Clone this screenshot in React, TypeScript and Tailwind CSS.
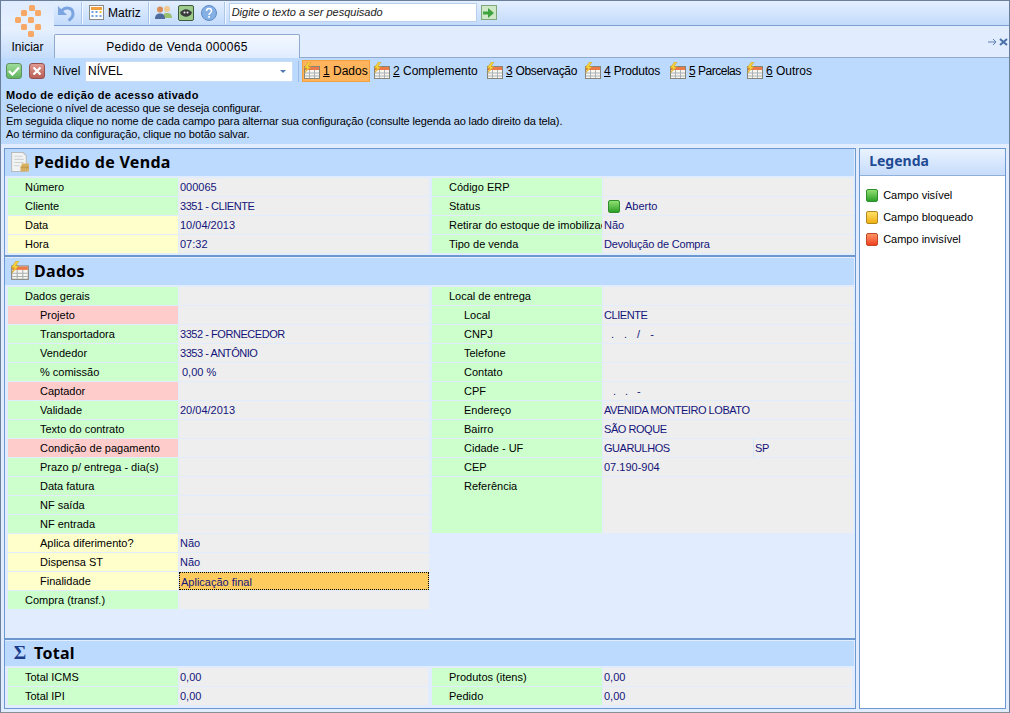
import { ReactNode } from "react";

const GREEN = "bg-[#ccffcc]";
const YELLOW = "bg-[#ffffcc]";
const RED = "bg-[#ffcccc]";

function TableIcon({ size = 18 }: { size?: number }) {
  return (
    <svg width={size} height={size} viewBox="0 0 18 18">
      <rect x="1.500" y="4.500" width="15" height="12" fill="#f8f6ee" stroke="#85857c" />
      <rect x="2" y="5" width="14" height="3" fill="#ec7a48" />
      <path d="M2 11h14M2 14h14M6.500 8v8M11.500 8v8" stroke="#a9b0b6" fill="none" />
      <path d="M5.500 0 1 6h3L1.500 11 8 4.500H5L8 0z" fill="#f9d63e" stroke="#c4941c" strokeWidth="0.500" />
    </svg>
  );
}

function Logo() {
  const squares = [
    [14, 0], [6, 5], [20, 5], [0, 12], [13, 12], [6, 19], [20, 19], [13, 26],
  ];
  return (
    <svg width="26" height="32" viewBox="0 0 26 32">
      {squares.map(([x, y]) => (
        <rect key={`${x}-${y}`} x={x} y={y} width="6" height="6" rx="1.500" fill="#f7a866" />
      ))}
    </svg>
  );
}

function Sep() {
  return <div className="w-[2px] h-[22px] bg-[#f4f9ff] border-l border-[#a9c5e8]" />;
}

function Tab({
  n,
  label,
  active,
  w,
  tight,
}: {
  n: string;
  label: string;
  active?: boolean;
  w?: string;
  tight?: string;
}) {
  return (
    <div
      className={`flex items-center gap-[2px] h-[22px] ${w ?? ""} ${
        active ? "bg-[#fdb45c] border border-[#f2a040]" : "border border-transparent"
      }`}
    >
      <TableIcon />
      <span className={`whitespace-nowrap ${tight ?? ""}`}>
        <span className="underline">{n}</span> {label}
      </span>
    </div>
  );
}

// upper case runs narrower in the original font
function Caps({ children }: { children: ReactNode }) {
  return <span className="tracking-[-0.45px]">{children}</span>;
}

function Row({
  label,
  value,
  color = GREEN,
  indent,
  h = "h-[18px]",
  children,
  focus,
}: {
  label: string;
  value?: string;
  color?: string;
  indent?: boolean;
  h?: string;
  children?: ReactNode;
  focus?: boolean;
}) {
  return (
    <div className={`flex ${h} mb-px`}>
      <div
        className={`w-[170px] shrink-0 overflow-hidden whitespace-nowrap leading-[18px] text-black ${color} ${
          indent ? "pl-[32px]" : "pl-[17px]"
        }`}
      >
        {label}
      </div>
      <div
        className={`flex-1 ml-px overflow-hidden whitespace-nowrap leading-[18px] pl-[1px] text-[#14147a] ${
          focus ? "bg-[#fecb5e] border border-dotted border-black leading-[16px]" : "bg-[#eeeeee]"
        }`}
      >
        {children ?? value}
      </div>
    </div>
  );
}

function SectionHeader({ icon, title, h }: { icon: ReactNode; title: string; h: string }) {
  return (
    <div className={`${h} bg-[#bcd9fe] flex items-center pl-[5px] gap-[4px] mb-[2px] mr-px`}>
      <div className="w-[20px] flex justify-center">{icon}</div>
      <span
        className="text-[16px] font-bold text-black leading-none tracking-[0.3px]"
        style={{ fontFamily: '"Noto Sans", sans-serif' }}
      >
        {title}
      </span>
    </div>
  );
}

function Dot({ from, to, border }: { from: string; to: string; border: string }) {
  return (
    <div
      className={`w-[12px] h-[13px] rounded-[2px] border bg-gradient-to-b ${from} ${to} ${border}`}
    />
  );
}

export default function App() {
  return (
    <div className="w-[1010px] h-[713px] overflow-hidden bg-[#e1edfe] border border-[#6b7f9a] border-b-[#8a8f96] text-[11px] text-black flex flex-col relative font-['Liberation_Sans',sans-serif]">
      {/* top toolbar */}
      <div className="h-[25px] shrink-0 flex items-center pb-[1px] border-b border-[#7da2d2] bg-gradient-to-b from-[#e3efff] to-[#c3dbfb] pl-[56px]">
        <svg width="18" height="18" viewBox="0 0 18 18" className="mr-[6px]">
          <path d="M1 2v9h9z" fill="#7ca4e0" />
          <path d="M4.500 7C8.500 2.500 16 3 16 10c0 3-2 5-4.500 6.500" fill="none" stroke="#7ca4e0" strokeWidth="3" />
        </svg>
        <Sep />
        <div className="flex items-center gap-[4px] ml-[6px] mr-[7px] text-[12px]">
          <svg width="15" height="15" viewBox="0 0 15 15">
            <rect x="0.500" y="0.500" width="14" height="14" fill="#fff" stroke="#8a8a8a" />
            <rect x="2" y="2" width="11" height="3" fill="#f0a040" />
            <path d="M2.500 6h2v2h-2zM6.500 6h2v2h-2zM2.500 10h2v2h-2zM6.500 10h2v2h-2zM10.500 10h2v2h-2z" fill="#6f9fe0" />
            <path d="M10.500 6h2v2h-2z" fill="#f4c030" />
          </svg>
          <span>Matriz</span>
        </div>
        <Sep />
        <svg width="17" height="15" viewBox="0 0 17 15" className="ml-[5px]">
          <circle cx="12" cy="4" r="3" fill="#f0c890" />
          <path d="M8 13c0-4 1-5 4-5s5 1 5 5z" fill="#9cc070" />
          <circle cx="5" cy="4.500" r="3" fill="#d88c58" />
          <path d="M0 14c0-4 2-5.500 5-5.500s5 1.500 5 5.500z" fill="#4f6a9c" />
        </svg>
        <div className="ml-[6px] w-[16px] h-[16px] rounded-[2px] bg-[#9ccb8c] border border-[#3f5a3a] flex items-center justify-center">
          <svg width="12" height="8" viewBox="0 0 12 8">
            <path d="M0 4c3-5 9-5 12 0-3 5-9 5-12 0z" fill="#3a3a3a" />
            <circle cx="4.500" cy="3.500" r="1" fill="#eee" />
            <circle cx="7.500" cy="3.500" r="1" fill="#eee" />
          </svg>
        </div>
        <svg width="16" height="16" viewBox="0 0 16 16" className="ml-[7px] mr-[7px]">
          <circle cx="8" cy="8" r="7.500" fill="#84b0e6" stroke="#5f8bc4" />
          <path d="M5.500 6c0-3.200 5-3.200 5 0 0 2-2.500 2-2.500 4" fill="none" stroke="#fff" strokeWidth="1.500" />
          <rect x="7.200" y="11" width="1.600" height="1.800" fill="#fff" />
        </svg>
        <Sep />
        <div className="ml-[3px] w-[248px] h-[19px] bg-white border border-[#b8d0ee] pl-[2px] italic leading-[17px] text-[#222]">
          Digite o texto a ser pesquisado
        </div>
        <div className="ml-[4px] w-[16px] h-[15px] bg-[#cfe8c8] border border-[#7fa87a] flex items-center justify-center">
          <svg width="11" height="10" viewBox="0 0 11 10">
            <path d="M0 3.500h5V0l6 5-6 5V6.500H0z" fill="#3fa33f" />
          </svg>
        </div>
      </div>

      {/* Iniciar button, sits over both bars */}
      <div className="absolute left-0 top-0 w-[53px] h-[57px] bg-gradient-to-b from-[#dfecff] via-[#e6f0ff] to-[#c4dcfb] flex flex-col items-center pt-[4px]">
        <Logo />
        <span className="mt-[3px] text-[12px] leading-[15px]">Iniciar</span>
      </div>

      {/* tab bar */}
      <div className="h-[32px] shrink-0 pl-[53px] pr-[1px] flex items-end justify-between border-b border-[#8fa9cf]">
        <div className="w-[246px] h-[24px] -mb-px bg-gradient-to-b from-[#f4f8ff] to-[#dfecff] border border-b-0 border-[#8fa9cf] rounded-t-[2px] flex items-center justify-center text-[12px] tracking-[0.3px]">
          Pedido de Venda 000065
        </div>
        <div className="flex items-center h-[24px] gap-[1px] pb-[6px] text-[#5a80b4]">
          <svg width="10" height="8" viewBox="0 0 10 8">
            <path d="M0 4h8M5 1l3 3-3 3" fill="none" stroke="#5a80b4" />
          </svg>
          <svg width="9" height="8" viewBox="0 0 9 8">
            <path d="M1 1l7 6M8 1L1 7" fill="none" stroke="#4a70a8" strokeWidth="2" />
          </svg>
        </div>
      </div>

      {/* action bar + notice */}
      <div className="h-[86px] shrink-0 bg-[#bcd9fe] flex flex-col">
        <div className="h-[26px] flex items-center pl-[5px] text-[12px]">
          <div className="w-[16px] h-[16px] rounded-[3px] bg-gradient-to-b from-[#9fdc9a] to-[#5fb45f] border border-[#5f9060] flex items-center justify-center">
            <svg width="12" height="10" viewBox="0 0 12 10">
              <path d="M1 5l3.500 3.500L11 1.500" fill="none" stroke="#fff" strokeWidth="2.200" />
            </svg>
          </div>
          <div className="ml-[7px] w-[16px] h-[16px] rounded-[3px] bg-gradient-to-b from-[#e09a90] to-[#b85f58] border border-[#955050] flex items-center justify-center">
            <svg width="10" height="10" viewBox="0 0 10 10">
              <path d="M1.500 1.500l7 7M8.500 1.500l-7 7" fill="none" stroke="#fff" strokeWidth="2.200" />
            </svg>
          </div>
          <span className="ml-[8px] w-[32px]">Nível</span>
          <div className="w-[208px] h-[21px] bg-white border border-[#c8dcf4] flex items-center justify-between pl-[2px] pr-[6px]">
            <span>NÍVEL</span>
            <span className="w-0 h-0 border-l-[3px] border-r-[3px] border-t-[3px] border-l-transparent border-r-transparent border-t-[#4f78b0]" />
          </div>
          <div className="ml-[5px] mr-[3px] h-[21px] w-px bg-[#9dbbe2]" />
          <Tab n="1" label="Dados" active w="w-[68px] mr-[2px]" />
          <Tab n="2" label="Complemento" w="w-[113px]" />
          <Tab n="3" label="Observação" w="w-[98px]" tight="tracking-[-0.3px]" />
          <Tab n="4" label="Produtos" w="w-[85px]" tight="tracking-[-0.2px]" />
          <Tab n="5" label="Parcelas" w="w-[77px]" tight="tracking-[-0.5px]" />
          <Tab n="6" label="Outros" />
        </div>
        <div className="pl-[5px] pt-[5px] leading-[13px] tracking-[-0.13px]">
          <div className="font-bold tracking-[0.37px]">Modo de edição de acesso ativado</div>
          <div>Selecione o nível de acesso que se deseja configurar.</div>
          <div>Em seguida clique no nome de cada campo para alternar sua configuração (consulte legenda ao lado direito da tela).</div>
          <div>Ao término da configuração, clique no botão salvar.</div>
        </div>
      </div>

      {/* content */}
      <div className="flex-1 flex pl-[3px] pr-[3px] pb-[3px] pt-[4px] gap-[3px] min-h-0">
        <div className="w-[853px] border border-[#6c97cf] flex flex-col bg-[#e1edfe]">
          <SectionHeader
            h="h-[27px] pb-[1px]"
            title="Pedido de Venda"
            icon={
              <svg width="20" height="21" viewBox="0 0 19 20">
                <path d="M1.500.5h11l3 3v15h-14z" fill="#f2f3f3" stroke="#b8bcbc" />
                <path d="M4 4h8M4 7h9M4 10h9M4 13h5" stroke="#cfd2d2" />
                <rect x="11" y="11" width="7" height="2.500" fill="#d8b060" />
                <rect x="10" y="13.500" width="8" height="2.500" fill="#c89c48" />
                <rect x="10" y="16" width="8" height="2.500" fill="#d8b060" />
              </svg>
            }
          />
          <div className="grid grid-cols-[421px_422px] pl-[3px] gap-x-[2px]">
            <div>
              <Row label="Número" value="000065" />
              <Row label="Cliente">
                <Caps>3351 - CLIENTE</Caps>
              </Row>
              <Row label="Data" value="10/04/2013" color={YELLOW} />
              <Row label="Hora" value="07:32" color={YELLOW} />
            </div>
            <div className="pl-px">
              <Row label="Código ERP" />
              <Row label="Status">
                <div className="flex items-center h-full pl-[4px] gap-[5px]">
                  <Dot from="from-[#8fe070]" to="to-[#28a028]" border="border-[#2f8f2f]" />
                  <span>Aberto</span>
                </div>
              </Row>
              <Row label="Retirar do estoque de imobilização" value="Não" />
              <Row label="Tipo de venda">
                <span className="tracking-[-0.2px]">Devolução de Compra</span>
              </Row>
            </div>
          </div>
          <div className="h-[2px] mt-[1px] bg-[#6c97cf]" />
          <div className="h-[1px]" />
          <SectionHeader h="h-[27px] pb-[1px]" title="Dados" icon={<TableIcon size={20} />} />
          <div className="grid grid-cols-[421px_422px] pl-[3px] gap-x-[2px] flex-1 items-start">
            <div>
              <Row label="Dados gerais" />
              <Row label="Projeto" color={RED} indent />
              <Row label="Transportadora" indent>
                <Caps>3352 - FORNECEDOR</Caps>
              </Row>
              <Row label="Vendedor" indent>
                <Caps>3353 - ANTÔNIO</Caps>
              </Row>
              <Row label="% comissão" indent>
                <span className="pl-[2px]">0,00 %</span>
              </Row>
              <Row label="Captador" color={RED} indent />
              <Row label="Validade" value="20/04/2013" indent />
              <Row label="Texto do contrato" indent />
              <Row label="Condição de pagamento" color={RED} indent />
              <Row label="Prazo p/ entrega - dia(s)" indent />
              <Row label="Data fatura" indent />
              <Row label="NF saída" indent />
              <Row label="NF entrada" indent />
              <Row label="Aplica diferimento?" value="Não" color={YELLOW} indent />
              <Row label="Dispensa ST" value="Não" color={YELLOW} indent />
              <Row label="Finalidade" value="Aplicação final" color={YELLOW} indent focus />
              <Row label="Compra (transf.)" />
            </div>
            <div className="pl-px">
              <Row label="Local de entrega" />
              <Row label="Local" indent>
                <Caps>CLIENTE</Caps>
              </Row>
              <Row label="CNPJ" indent>
                <span className="pl-[7px] tracking-[10px]">../-</span>
              </Row>
              <Row label="Telefone" indent />
              <Row label="Contato" indent />
              <Row label="CPF" indent>
                <span className="pl-[9px] tracking-[9px]">..-</span>
              </Row>
              <Row label="Endereço" indent>
                <Caps>AVENIDA MONTEIRO LOBATO</Caps>
              </Row>
              <Row label="Bairro" indent>
                <Caps>SÃO ROQUE</Caps>
              </Row>
              <Row label="Cidade - UF" indent>
                <div className="flex h-full -ml-[1px]">
                  <span className="w-[150px] pl-[1px]">
                    <Caps>GUARULHOS</Caps>
                  </span>
                  <span className="pl-[1px] border-l border-[#d6e6fb]">
                    <Caps>SP</Caps>
                  </span>
                </div>
              </Row>
              <Row label="CEP" value="07.190-904" indent />
              <Row label="Referência" indent h="h-[56px]" />
            </div>
          </div>
          <div className="h-[2px] bg-[#6c97cf]" />
          <div className="h-[1px]" />
          <SectionHeader
            h="h-[25px] pb-[2px]"
            title="Total"
            icon={
              <span className="text-[19px] font-bold text-[#1c3c8c] leading-none font-['Liberation_Serif',serif]">
                Σ
              </span>
            }
          />
          <div className="grid grid-cols-[420px_420px] pl-[3px] gap-x-[4px]">
            <div>
              <Row label="Total ICMS" value="0,00" />
              <Row label="Total IPI" value="0,00" />
            </div>
            <div>
              <Row label="Produtos (itens)" value="0,00" />
              <Row label="Pedido" value="0,00" />
            </div>
          </div>
          <div className="h-[2px]" />
        </div>

        <div className="w-[147px] border border-[#6c97cf] bg-white flex flex-col">
          <div
            className="h-[27px] pb-[3px] border-b border-[#8fb0dc] bg-gradient-to-b from-[#eaf3ff] to-[#c6dcfa] pl-[9px] flex items-center text-[14px] font-bold text-[#1f4a94]"
            style={{ fontFamily: '"Noto Sans", sans-serif' }}
          >
            Legenda
          </div>
          <div className="pt-[13px] pl-[6px] flex flex-col gap-[9px]">
            <div className="flex items-center gap-[5px] h-[13px]">
              <Dot from="from-[#8fe070]" to="to-[#28a028]" border="border-[#2f8f2f]" />
              <span>Campo visível</span>
            </div>
            <div className="flex items-center gap-[5px] h-[13px]">
              <Dot from="from-[#ffe060]" to="to-[#f0b000]" border="border-[#b08820]" />
              <span>Campo bloqueado</span>
            </div>
            <div className="flex items-center gap-[5px] h-[13px]">
              <Dot from="from-[#ff9060]" to="to-[#f04020]" border="border-[#c04828]" />
              <span>Campo invisível</span>
            </div>
          </div>
        </div>
      </div>
    </div>
  );
}
